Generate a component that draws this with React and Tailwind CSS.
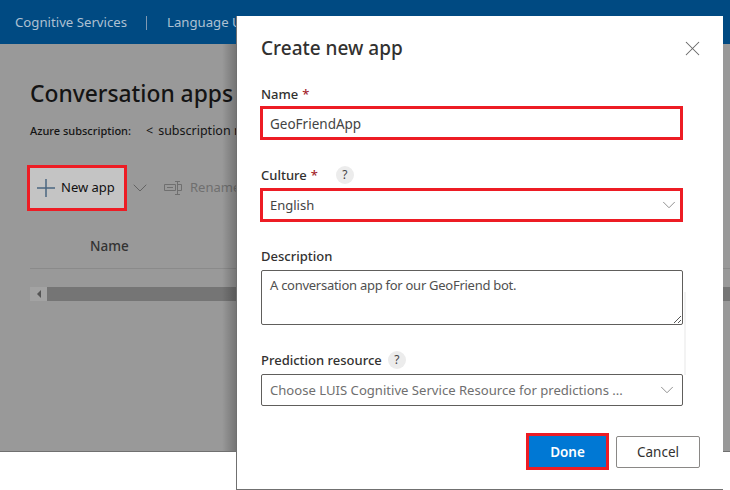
import { X, ChevronDown } from 'lucide-react';

function Help({ className }) {
  return (
    <span className={`flex h-[18px] w-[18px] items-center justify-center rounded-full bg-[#ececec] text-[12px] text-[#444] ${className}`}>
      ?
    </span>
  );
}

function Label({ children, required }) {
  return (
    <span className="text-[13px] leading-[18px] font-medium text-[#323130]">
      {children}
      {required && <span className="ml-1 text-[#a4262c]">*</span>}
    </span>
  );
}

function RenameIcon() {
  return (
    <svg width="18" height="14" viewBox="0 0 18 14" fill="none" stroke="#6f6f6f" strokeWidth="1">
      <path d="M0.5 3.5h11v6h-11zM3 6.5h6" />
      <path d="M11 0.5h5M11 13.5h5M13.5 0.5v13M13.5 3.5h4v6h-4" />
    </svg>
  );
}

export default function App() {
  return (
    <div className="relative h-[490px] w-[730px] overflow-hidden bg-white font-['Noto_Sans',sans-serif]">
      {/* Page behind the dialog */}
      <header className="flex h-[44px] items-center bg-[#004a82] pt-px pl-[15px] text-[13.2px] text-[#adc0d2]">
        <span className="w-[113px] whitespace-nowrap">Cognitive Services</span>
        <span className="ml-[18px] h-[14px] w-px bg-[#8099b2]"></span>
        <span className="ml-[20px] whitespace-nowrap">Language Understanding</span>
      </header>

      <main className="relative h-[408px] border-b border-[#707070] bg-[#999999] pt-[34px] pl-[30px]">
        <div className="pointer-events-none absolute top-0 bottom-0 left-[222px] w-[15px] bg-gradient-to-r from-transparent to-[#00000040]"></div>
        <h1 className="text-[22.8px] leading-[32px] font-medium whitespace-nowrap text-[#141414]">Conversation apps</h1>
        <div className="mt-[12px] flex items-center text-[#141414]">
          <span className="w-[116px] text-[11px] font-medium whitespace-nowrap">Azure subscription:</span>
          <span className="text-[12.5px] whitespace-nowrap">&lt;</span>
          <span className="ml-[5px] text-[12.5px] whitespace-nowrap">subscription name &gt;</span>
        </div>

        <div className="mt-[24px] flex h-[46px] items-center">
          <button className="-ml-[3px] flex h-[46px] w-[100px] items-center border-[3px] border-[#ed1c24] bg-[#c4c4c4] pl-[7px]">
            <svg width="18" height="18" viewBox="0 0 18 18" fill="none" stroke="#4a6580" strokeWidth="1.5">
              <path d="M0 9h18M9 0v18" />
            </svg>
            <span className="ml-[6px] text-[13px] text-[#101010]">New app</span>
          </button>
          <ChevronDown size={24} strokeWidth={0.8} className="ml-px text-[#555]" />
          <span className="ml-[12px] flex items-center gap-[8px] text-[13px] text-[#6f6f6f]">
            <RenameIcon />
            Rename
          </span>
        </div>

        <div className="mt-[14px] flex h-[44px] items-center border-b border-[#8a8a8a] pl-[60px] text-[13.5px] font-medium text-[#333]">
          Name
        </div>

        <div className="mt-[18px] flex h-[14px] bg-[#a3a3a3]">
          <span className="flex w-[17px] items-center justify-center">
            <span className="h-0 w-0 border-y-[4px] border-r-[4px] border-y-transparent border-r-[#555]"></span>
          </span>
          <span className="flex-1 bg-[#757575]"></span>
        </div>
      </main>

      {/* Dialog */}
      <div className="absolute top-[16px] left-[236px] flex h-[474px] w-[487px] flex-col border-b border-l border-[#707070] bg-white pr-[40px] pl-[24px]">
        <div className="pointer-events-none absolute top-[276px] left-[447px] h-[83px] w-[2px] bg-[#f3f3f3]"></div>

        <div className="mt-[18px] flex h-[28px] items-center justify-between">
          <h2 className="text-[19px] font-medium text-[#323130]">Create new app</h2>
          <X size={25} strokeWidth={1} className="-mr-[22px] text-[#666]" />
        </div>

        <div className="mt-[23px] flex h-[18px] items-center">
          <Label required>Name</Label>
        </div>
        <div className="-ml-px mt-[3px] flex h-[34px] w-[423px] items-center border-[3px] border-[#ed1c24] pt-[3px] pl-[7px] text-[13.5px] text-[#444]">
          GeoFriendApp
        </div>

        <div className="mt-[26px] flex h-[18px] items-center">
          <Label required>Culture</Label>
          <Help className="ml-[18px]" />
        </div>
        <div className="-ml-px mt-[4px] flex h-[34px] w-[423px] items-center justify-between border-[3px] border-[#ed1c24] pl-[7px] text-[13px] text-[#444]">
          <span className="pt-[2px]">English</span>
          <ChevronDown size={22} strokeWidth={1} className="text-[#888]" />
        </div>

        <div className="mt-[25px] flex h-[18px] items-center">
          <Label>Description</Label>
        </div>
        <div className="relative mt-[5px] h-[55px] w-[422px] rounded-[2px] border border-[#605e5c] px-[8px] pt-[5px] text-[13px] leading-[18px] tracking-[-0.27px] text-[#505050]">
          A conversation app for our GeoFriend bot.
          <svg className="absolute right-0 bottom-0" width="9" height="9" viewBox="0 0 9 9" stroke="#555" strokeWidth="1">
            <path d="M1 8L8 1M5 8L8 5" />
          </svg>
        </div>

        <div className="mt-[26px] flex h-[18px] items-center">
          <Label>Prediction resource</Label>
          <Help className="ml-[6px]" />
        </div>
        <div className="mt-[5px] flex h-[32px] w-[422px] items-center justify-between rounded-[2px] border border-[#605e5c] pr-[4px] pl-[8px] text-[13.1px] whitespace-nowrap text-[#6f6f6f]">
          <span className="w-[370px] overflow-hidden pt-[2px]">Choose LUIS Cognitive Service Resource for predictions ...</span>
          <ChevronDown size={22} strokeWidth={1} className="text-[#888]" />
        </div>

        <div className="mt-[27px] flex items-center justify-end gap-[7px]">
          <button className="flex h-[37px] w-[83px] items-center justify-center border-[3px] border-[#ed1c24] bg-[#0078d4] pt-px text-[13.5px] font-semibold text-white">
            Done
          </button>
          <button className="-mr-[17px] flex h-[32px] w-[84px] items-center justify-center rounded-[2px] border border-[#8a8886] pt-px text-[13.5px] text-[#323130]">
            Cancel
          </button>
        </div>
      </div>
    </div>
  );
}
